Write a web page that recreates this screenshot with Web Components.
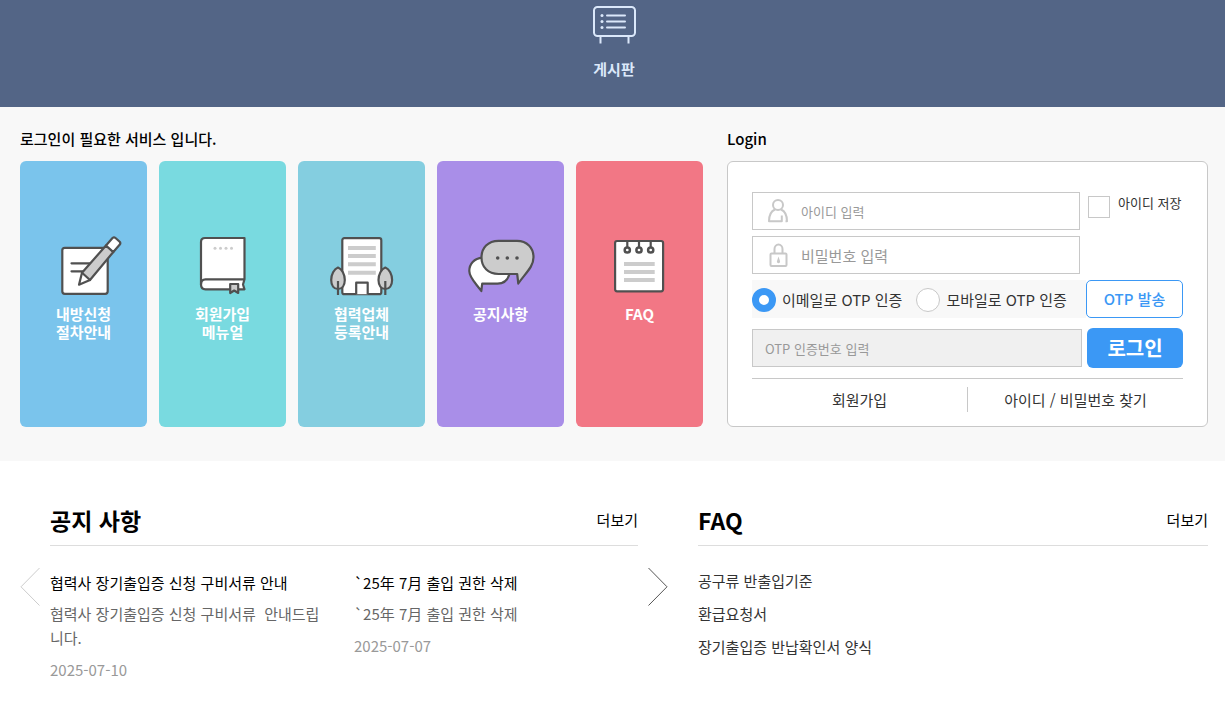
<!DOCTYPE html>
<html lang="ko">
<head>
<meta charset="utf-8">
<meta name="viewport" content="width=device-width, initial-scale=1">
<title>협력사 출입 서비스</title>
<style>
  body {
    margin: 0;
    background: #fff;
    color: #000;
    font: 400 15px/24px "Noto Sans CJK KR", "Noto Sans", sans-serif;
  }
</style>
</head>
<body>
<main-page></main-page>

<template id="t-main-page">
  <style>
    :host { display: block; }
    .services, .boards { display: grid; padding-left: 20px; padding-right: 17px; }
    .services { grid-template-columns: 683fr 481fr; gap: 24px; background: #f8f8f8; padding-top: 20px; padding-bottom: 34px; }
    .boards { grid-template-columns: 648fr 510fr; gap: 30px; padding-top: 41px; padding-bottom: 28px; }
    section { display: flex; flex-direction: column; min-width: 0; }
    h2 { margin: 0 0 10px; font-size: 15px; line-height: 24px; font-weight: 500; }
    .cards { display: grid; grid-template-columns: repeat(5, 1fr); gap: 12px; flex: 1; }
    login-panel { flex: 1; }
  </style>
  <top-bar></top-bar>
  <main>
    <div class="services">
      <section>
        <h2>로그인이 필요한 서비스 입니다.</h2>
        <div class="cards">
          <service-card style="--tone:#7ac4ec">
            <svg slot="icon" width="77" height="60" viewBox="-.5 0 77 60" fill="#fff" stroke="#505050" stroke-width="2.2" stroke-linejoin="round" stroke-linecap="round">
              <rect x="16.8" y="11.8" width="45.4" height="46" rx="2.5"/>
              <path d="M26 27.3H44M26 35.3H37"/>
              <path d="M36.5 36.7 33.5 48.7 44.5 44"/>
              <path fill="#ccc" d="M36.5 36.7 60.5 9.5 67.8 16 44.5 44Z"/>
              <path d="M60.5 9.5 67 2Q68.5 .8 70 2L74.2 5.8Q75.4 7.2 74.3 8.6L67.8 16Z"/>
            </svg>
            내방신청<br>절차안내
          </service-card>
          <service-card style="--tone:#79dae0">
            <svg slot="icon" width="77" height="60" viewBox="-.5 0 77 60" fill="#fff" stroke="#505050" stroke-width="2.2" stroke-linejoin="round">
              <path d="M60 2H20.5Q16.5 2 16.5 6V48.5Q16.5 53.3 21 53.3H60L58.5 48.5 60 43.3Z"/>
              <path fill="none" d="M60 43.3H21Q16.5 43.3 16.5 48.5"/>
              <path fill="#ccc" d="M45.7 48H53.7V57L49.7 54.5 45.7 57Z"/>
              <g fill="#ccc" stroke="none"><circle cx="30.5" cy="12.3" r="1.5"/><circle cx="36" cy="12.3" r="1.5"/><circle cx="41.5" cy="12.3" r="1.5"/><circle cx="47" cy="12.3" r="1.5"/></g>
            </svg>
            회원가입<br>메뉴얼
          </service-card>
          <service-card style="--tone:#84cee0">
            <svg slot="icon" width="77" height="60" viewBox="-.5 0 77 60" fill="#fff" stroke="#505050" stroke-width="2.2" stroke-linejoin="round">
              <rect x="18.8" y="2.2" width="39" height="56" rx="2"/>
              <path stroke="#ccc" stroke-width="4" d="M24.5 12H52.3M24.5 20H52.3M24.5 28.3H52.3M24.5 36.7H52.3"/>
              <path d="M32.7 58.2V46.7H44.2V58.2"/>
              <path fill="#ccc" d="M14.5 31.5C18.5 33 21.3 38.5 21.3 44S18.5 53 14.5 53 7.7 49.5 7.7 44 10.5 33 14.5 31.5Z"/>
              <path fill="#ccc" d="M61.8 31.5C65.8 33 68.6 38.5 68.6 44S65.8 53 61.8 53 55 49.5 55 44 57.8 33 61.8 31.5Z"/>
              <path d="M14.5 45V59M61.8 45V59"/>
            </svg>
            협력업체<br>등록안내
          </service-card>
          <service-card style="--tone:#a98ee8">
            <svg slot="icon" width="77" height="60" viewBox="-.5 0 77 60" fill="#fff" stroke="#505050" stroke-width="2.2" stroke-linejoin="round">
              <path d="M20 21.7C11.5 22.5 6.8 28 6.8 35 6.8 42 14 48 18.8 55L19.7 47.7H35C41 47.7 45 44.5 47 38Z"/>
              <path fill="#ccc" d="M36 4.8H54.5C64.5 4.8 71 12 71 21.3 71 31 63 37 55.8 47.5L54.7 38H36C25.5 38 19 31 19 21.5S25.5 4.8 36 4.8Z"/>
              <g fill="#505050" stroke="none"><circle cx="35.2" cy="22" r="1.8"/><circle cx="44.8" cy="22" r="1.8"/><circle cx="54.5" cy="22" r="1.8"/></g>
            </svg>
            공지사항
          </service-card>
          <service-card style="--tone:#f27785">
            <svg slot="icon" width="77" height="60" viewBox="-.5 0 77 60" fill="#fff" stroke="#505050" stroke-width="2.2">
              <rect x="13.6" y="5" width="48" height="50.3" rx="2"/>
              <path d="M25.8 5V11M37.5 5V11M49.2 5V11"/>
              <g stroke-width="2.5"><circle cx="25.8" cy="14" r="2.6"/><circle cx="37.5" cy="14" r="2.6"/><circle cx="49.2" cy="14" r="2.6"/></g>
              <path stroke="#ccc" stroke-width="4" d="M22.5 28H53.2M22.5 36H53.2M22.5 44H53.2"/>
            </svg>
            FAQ
          </service-card>
        </div>
      </section>
      <section>
        <h2>Login</h2>
        <login-panel></login-panel>
      </section>
    </div>
    <div class="boards">
      <notice-board></notice-board>
      <faq-board></faq-board>
    </div>
  </main>
</template>

<template id="t-top-bar">
  <style>
    :host { display: block; background: #536586; }
    nav { display: flex; justify-content: center; padding: 5px 17px 26px 20px; }
    a { display: flex; flex-direction: column; align-items: center; gap: 12px; color: #dbe8fa; font-weight: 700; text-decoration: none; }
    svg { display: block; }
  </style>
  <nav>
    <a href="#board">
      <svg width="45" height="40" viewBox="0 0 45 40" fill="none" stroke="#dbe8fa" stroke-width="2">
        <rect x="2" y="2" width="41" height="29" rx="3.5"/>
        <path d="M8.5 31V38.5M36.5 31V38.5"/>
        <path stroke-linecap="round" d="M15 10.5H33M15 16.5H33M15 22.5H33"/>
        <g fill="#dbe8fa" stroke="none"><circle cx="10" cy="10.5" r="1.5"/><circle cx="10" cy="16.5" r="1.5"/><circle cx="10" cy="22.5" r="1.5"/></g>
      </svg>
      <span>게시판</span>
    </a>
  </nav>
</template>

<template id="t-service-card">
  <style>
    :host { display: flex; min-width: 0; }
    a { flex: 1; box-sizing: border-box; min-height: 266px; padding-top: 75px; border-radius: 6px; background: var(--tone); color: #fff; font-size: 15px; line-height: 18px; font-weight: 700; text-align: center; text-decoration: none; }
    ::slotted(svg) { display: block; margin: 0 auto 9px; }
  </style>
  <a href="#service"><slot name="icon"></slot><slot></slot></a>
</template>

<template id="t-login-panel">
  <style>
    :host { display: block; box-sizing: border-box; background: #fff; border: 1px solid #c8c8c8; border-radius: 6px; padding: 30px 24px 0; color: #333; }
    form { margin: 0; }
    .row { display: flex; }
    .id { gap: 8px; margin-bottom: 6px; }
    .field { display: flex; align-items: center; box-sizing: border-box; flex: 1; min-width: 0; height: 38px; border: 1px solid #c8c8c8; background: #fff; padding-left: 12px; }
    .field svg { flex: none; margin-right: 8px; }
    input { margin: 0; box-sizing: border-box; }
    .field input { flex: 1; min-width: 0; height: 36px; padding: 0; border: 0; outline: 0; background: none; font: inherit; color: #333; }
    .field input::placeholder { color: #999; opacity: 1; }
    .field.small input { font-size: 13px; }
    .save { display: flex; width: 95px; gap: 8px; padding-top: 4px; }
    .save label { font-size: 13px; line-height: 14px; white-space: nowrap; }
    input[type=checkbox] { appearance: none; flex: none; width: 22px; height: 22px; border: 1px solid #c8c8c8; background: #fff; }
    input[type=checkbox]:checked { background: #3b98f5; }
    .pw { margin-bottom: 6px; padding-right: 103px; }
    .otp { margin-bottom: 10px; }
    fieldset { flex: 1; display: flex; align-items: center; gap: 14px; min-width: 0; margin: 0; padding: 2px 0 0; border: 0; background: #f8f8f8; box-sizing: border-box; }
    fieldset label { display: flex; align-items: center; gap: 6px; white-space: nowrap; }
    input[type=radio] { appearance: none; width: 24px; height: 24px; border: 1px solid #c8c8c8; border-radius: 50%; background: #fff; }
    input[type=radio]:checked { border: 7px solid #3b98f5; }
    button { flex: none; padding: 0; font: inherit; border-radius: 5px; cursor: pointer; }
    .send { width: 97px; height: 38px; background: #fff; border: 1px solid #3b98f5; color: #3b98f5; font-weight: 500; }
    .submit { align-items: center; gap: 5px; margin-bottom: 10px; }
    .submit .field { background: #f0f0f0; }
    .go { width: 96px; height: 40px; border: 0; border-radius: 6px; background: #3b98f5; color: #fff; font-size: 20px; font-weight: 700; }
    .links { display: flex; align-items: center; border-top: 1px solid #c8c8c8; padding: 8px 0 14px; }
    .links a { flex: 1; color: #333; text-align: center; text-decoration: none; line-height: 25px; }
    .links a + a { border-left: 1px solid #c8c8c8; }
  </style>
  <form onsubmit="return false">
    <div class="row id">
      <div class="field small">
        <svg width="28" height="28" viewBox="0 0 28 28" fill="none" stroke="#c8c8c8" stroke-width="2" stroke-linejoin="round">
          <circle cx="13" cy="8" r="5"/><path d="M10 12.500C6.500 14 4 18.500 4 24.300H16.800V18.500M16 12.500C19.500 14 22 18.500 22 24.300H20.500"/>
        </svg>
        <input type="text" placeholder="아이디 입력" aria-label="아이디">
      </div>
      <div class="save"><input type="checkbox" id="save"><label for="save">아이디 저장</label></div>
    </div>
    <div class="row pw">
      <div class="field">
        <svg width="28" height="28" viewBox="0 0 28 28" fill="none" stroke="#c8c8c8" stroke-width="2" stroke-linejoin="round">
          <rect x="5.500" y="12.500" width="16" height="12.500" rx="1"/><path d="M9.500 12V8A4 4.500 0 0 1 17.500 8V12"/><path d="M13.500 15.500 15 20A1.600 1.600 0 1 1 12 20Z" fill="#c8c8c8" stroke="none"/>
        </svg>
        <input type="password" placeholder="비밀번호 입력" aria-label="비밀번호">
      </div>
    </div>
    <div class="row otp">
      <fieldset aria-label="OTP 인증 방법">
        <label><input type="radio" name="otp" checked>이메일로 OTP 인증</label>
        <label><input type="radio" name="otp">모바일로 OTP 인증</label>
      </fieldset>
      <button type="button" class="send">OTP 발송</button>
    </div>
    <div class="row submit">
      <div class="field small"><input type="text" placeholder="OTP 인증번호 입력" aria-label="OTP 인증번호"></div>
      <button type="submit" class="go">로그인</button>
    </div>
  </form>
  <div class="links"><a href="#join">회원가입</a><a href="#find">아이디 / 비밀번호 찾기</a></div>
</template>

<template id="t-board-head">
  <style>
    :host { display: flex; align-items: center; justify-content: space-between; padding-bottom: 7px; border-bottom: 1px solid #ddd; }
    h2 { margin: 0; font-size: 23px; line-height: 36px; font-weight: 700; }
    a { color: #000; text-decoration: none; }
  </style>
  <h2><slot></slot></h2><a href="#more">더보기</a>
</template>

<template id="t-notice-board">
  <style>
    :host { display: grid; grid-template-columns: 20px 1fr 20px; column-gap: 10px; align-content: start; min-width: 0; }
    board-head { grid-column: 2; }
    button { grid-row: 2; align-self: start; margin: 21px 0 0; padding: 0; border: 0; background: none; width: 20px; height: 40px; cursor: pointer; }
    .prev { grid-column: 1; }
    .next { grid-column: 3; }
    svg { display: block; }
    .list { grid-column: 2; grid-row: 2; display: grid; grid-template-columns: 1fr 1fr; gap: 20px; padding-top: 25px; }
  </style>
  <board-head>공지 사항</board-head>
  <button class="prev" aria-label="이전"><svg width="20" height="40" fill="none" stroke="#ccc"><path d="M19.500 1 1 19.800 19.500 38.500"/></svg></button>
  <div class="list">
    <notice-item>
      <span slot="title">협력사 장기출입증 신청 구비서류 안내</span>
      협력사 장기출입증 신청 구비서류&nbsp; 안내드립니다.
      <span slot="date">2025-07-10</span>
    </notice-item>
    <notice-item>
      <span slot="title">`25年 7月 출입 권한 삭제</span>
      `25年 7月 출입 권한 삭제
      <span slot="date">2025-07-07</span>
    </notice-item>
  </div>
  <button class="next" aria-label="다음"><svg width="20" height="40" fill="none" stroke="#555"><path d="M.5 1 19 19.800 .5 38.500"/></svg></button>
</template>

<template id="t-notice-item">
  <style>
    :host { display: block; min-width: 0; padding-right: 10px; }
    a { color: #000; text-decoration: none; }
    h3, p { margin: 0; font-size: 15px; line-height: 24px; font-weight: 400; }
    h3 { margin-bottom: 7px; }
    p { margin-bottom: 8px; color: #666; }
    .date { color: #999; margin: 0; }
  </style>
  <a href="#notice"><h3><slot name="title"></slot></h3><p><slot></slot></p><p class="date"><slot name="date"></slot></p></a>
</template>

<template id="t-faq-board">
  <style>
    :host { display: block; min-width: 0; }
    ul { display: grid; gap: 9px; margin: 0; padding: 23px 0 0; list-style: none; }
    a { color: #333; text-decoration: none; }
  </style>
  <board-head>FAQ</board-head>
  <ul>
    <li><a href="#faq1">공구류 반출입기준</a></li>
    <li><a href="#faq2">환급요청서</a></li>
    <li><a href="#faq3">장기출입증 반납확인서 양식</a></li>
  </ul>
</template>

<script>
  class TemplateElement extends HTMLElement {
    constructor() {
      super();
      const template = document.getElementById('t-' + this.localName);
      this.attachShadow({ mode: 'open' }).append(template.content.cloneNode(true));
    }
  }
  customElements.define('top-bar', class extends TemplateElement {});
  customElements.define('service-card', class extends TemplateElement {});
  customElements.define('login-panel', class extends TemplateElement {});
  customElements.define('board-head', class extends TemplateElement {});
  customElements.define('notice-item', class extends TemplateElement {});
  customElements.define('notice-board', class extends TemplateElement {});
  customElements.define('faq-board', class extends TemplateElement {});
  customElements.define('main-page', class extends TemplateElement {});
</script>
</body>
</html>
